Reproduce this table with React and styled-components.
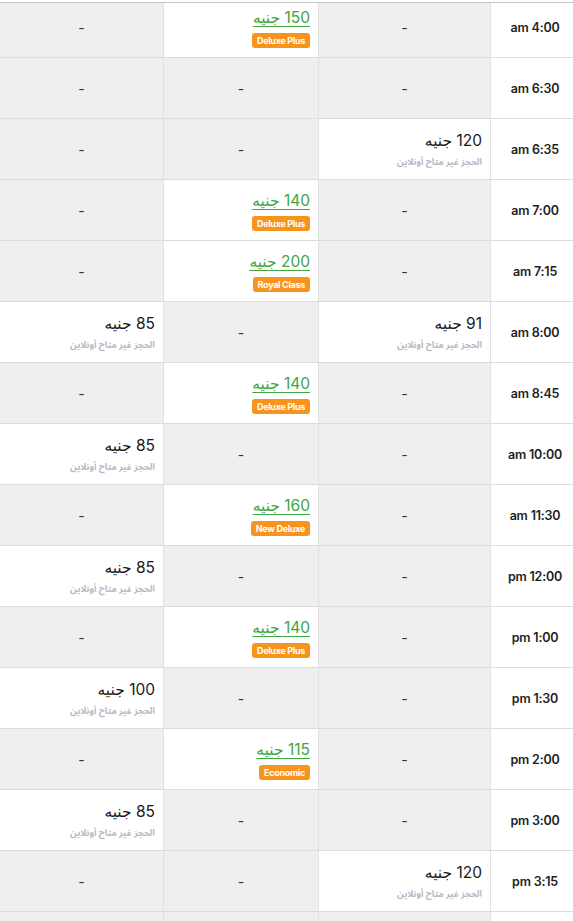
import React from "react";
import styled, { createGlobalStyle } from "styled-components";

const Global = createGlobalStyle`
  html, body { margin: 0; padding: 0; overflow: hidden; background: #fff; }
  body { font-family: "Inter", "DejaVu Sans", sans-serif; }
`;

const TopEdge = styled.div`
  position: fixed;
  top: 0;
  left: 0;
  right: 0;
  height: 2px;
  background: #fff;
  border-bottom: 1px solid #c4c4c4;
  z-index: 2;
`;

const Table = styled.div`
  direction: rtl;
  margin-top: -3px;
  width: 573px;
`;

const Row = styled.div`
  display: grid;
  grid-template-columns: 83px 172px 155px 163px;
  height: 61px;
  border-bottom: 1px solid #dcdcdc;
  box-sizing: border-box;
`;

const Cell = styled.div`
  box-sizing: border-box;
  background: ${(p) => (p.$filled ? "#ffffff" : "#efefef")};
  border-left: ${(p) => (p.$last ? "none" : "1px solid #e2e2e2")};
  display: flex;
  flex-direction: column;
  justify-content: center;
  align-items: ${(p) => (p.$filled ? "flex-start" : "center")};
  padding: ${(p) => (p.$filled ? "2px 8px 0" : "0")};
  gap: ${(p) => (p.$badge ? "6px" : "8px")};
`;

const TimeCell = styled.div`
  box-sizing: border-box;
  background: #fff;
  border-left: 1px solid #e2e2e2;
  display: flex;
  align-items: center;
  justify-content: center;
  padding-left: 6px;
  font-family: "Inter", sans-serif;
  font-weight: 600;
  font-size: 12.5px;
  color: #1e1e1e;
  letter-spacing: -0.2px;
`;

const Dash = styled.span`
  font-size: 14px;
  color: #333;
`;

const Price = styled.span`
  font-family: "Inter", "DejaVu Sans", sans-serif;
  font-size: 15.5px;
  line-height: 18px;
  color: ${(p) => (p.$link ? "#3fa541" : "#1a1a1a")};
  text-decoration: ${(p) => (p.$link ? "underline" : "none")};
  text-underline-offset: 3px;
  text-decoration-thickness: 1px;
  white-space: nowrap;
  letter-spacing: -0.3px;
`;

const Badge = styled.span`
  direction: ltr;
  background: #f7941d;
  color: #fff;
  font-family: "Inter", sans-serif;
  font-weight: 700;
  font-size: 9px;
  height: 15px;
  line-height: 15px;
  padding: 0 5px;
  border-radius: 3px;
  letter-spacing: -0.3px;
  white-space: nowrap;
`;

const Note = styled.span`
  font-family: "Noto Sans Arabic", "Noto Naskh Arabic", "DejaVu Sans", sans-serif;
  font-weight: 700;
  font-size: 9px;
  line-height: 10px;
  color: #b9b9c1;
  white-space: nowrap;
  letter-spacing: -0.5px;
`;

const NOTE = "الحجز غير متاح أونلاين";

const rows = [
  ["4:00 am", null, { p: 150, b: "Deluxe Plus" }, null],
  ["6:30 am", null, null, null],
  ["6:35 am", { p: 120 }, null, null],
  ["7:00 am", null, { p: 140, b: "Deluxe Plus" }, null],
  ["7:15 am", null, { p: 200, b: "Royal Class" }, null],
  ["8:00 am", { p: 91 }, null, { p: 85 }],
  ["8:45 am", null, { p: 140, b: "Deluxe Plus" }, null],
  ["10:00 am", null, null, { p: 85 }],
  ["11:30 am", null, { p: 160, b: "New Deluxe" }, null],
  ["12:00 pm", null, null, { p: 85 }],
  ["1:00 pm", null, { p: 140, b: "Deluxe Plus" }, null],
  ["1:30 pm", null, null, { p: 100 }],
  ["2:00 pm", null, { p: 115, b: "Economic" }, null],
  ["3:00 pm", null, null, { p: 85 }],
  ["3:15 pm", { p: 120 }, null, null],
];

function Fare({ data, last, blank }) {
  if (!data) {
    return <Cell $last={last}>{blank ? null : <Dash>-</Dash>}</Cell>;
  }
  return (
    <Cell $filled $badge={!!data.b} $last={last}>
      <Price $link={!!data.b}>{`${data.p} جنيه`}</Price>
      {data.b ? <Badge>{data.b}</Badge> : <Note>{NOTE}</Note>}
    </Cell>
  );
}

export default function App() {
  return (
    <>
      <Global />
      <TopEdge />
      <Table>
        {rows.map(([t, a, b, c], i) => (
          <Row key={i}>
            <TimeCell>{t}</TimeCell>
            <Fare data={a} />
            <Fare data={b} />
            <Fare data={c} last />
          </Row>
        ))}
        <Row>
          <TimeCell />
          <Fare blank />
          <Fare blank />
          <Fare blank last />
        </Row>
      </Table>
    </>
  );
}
